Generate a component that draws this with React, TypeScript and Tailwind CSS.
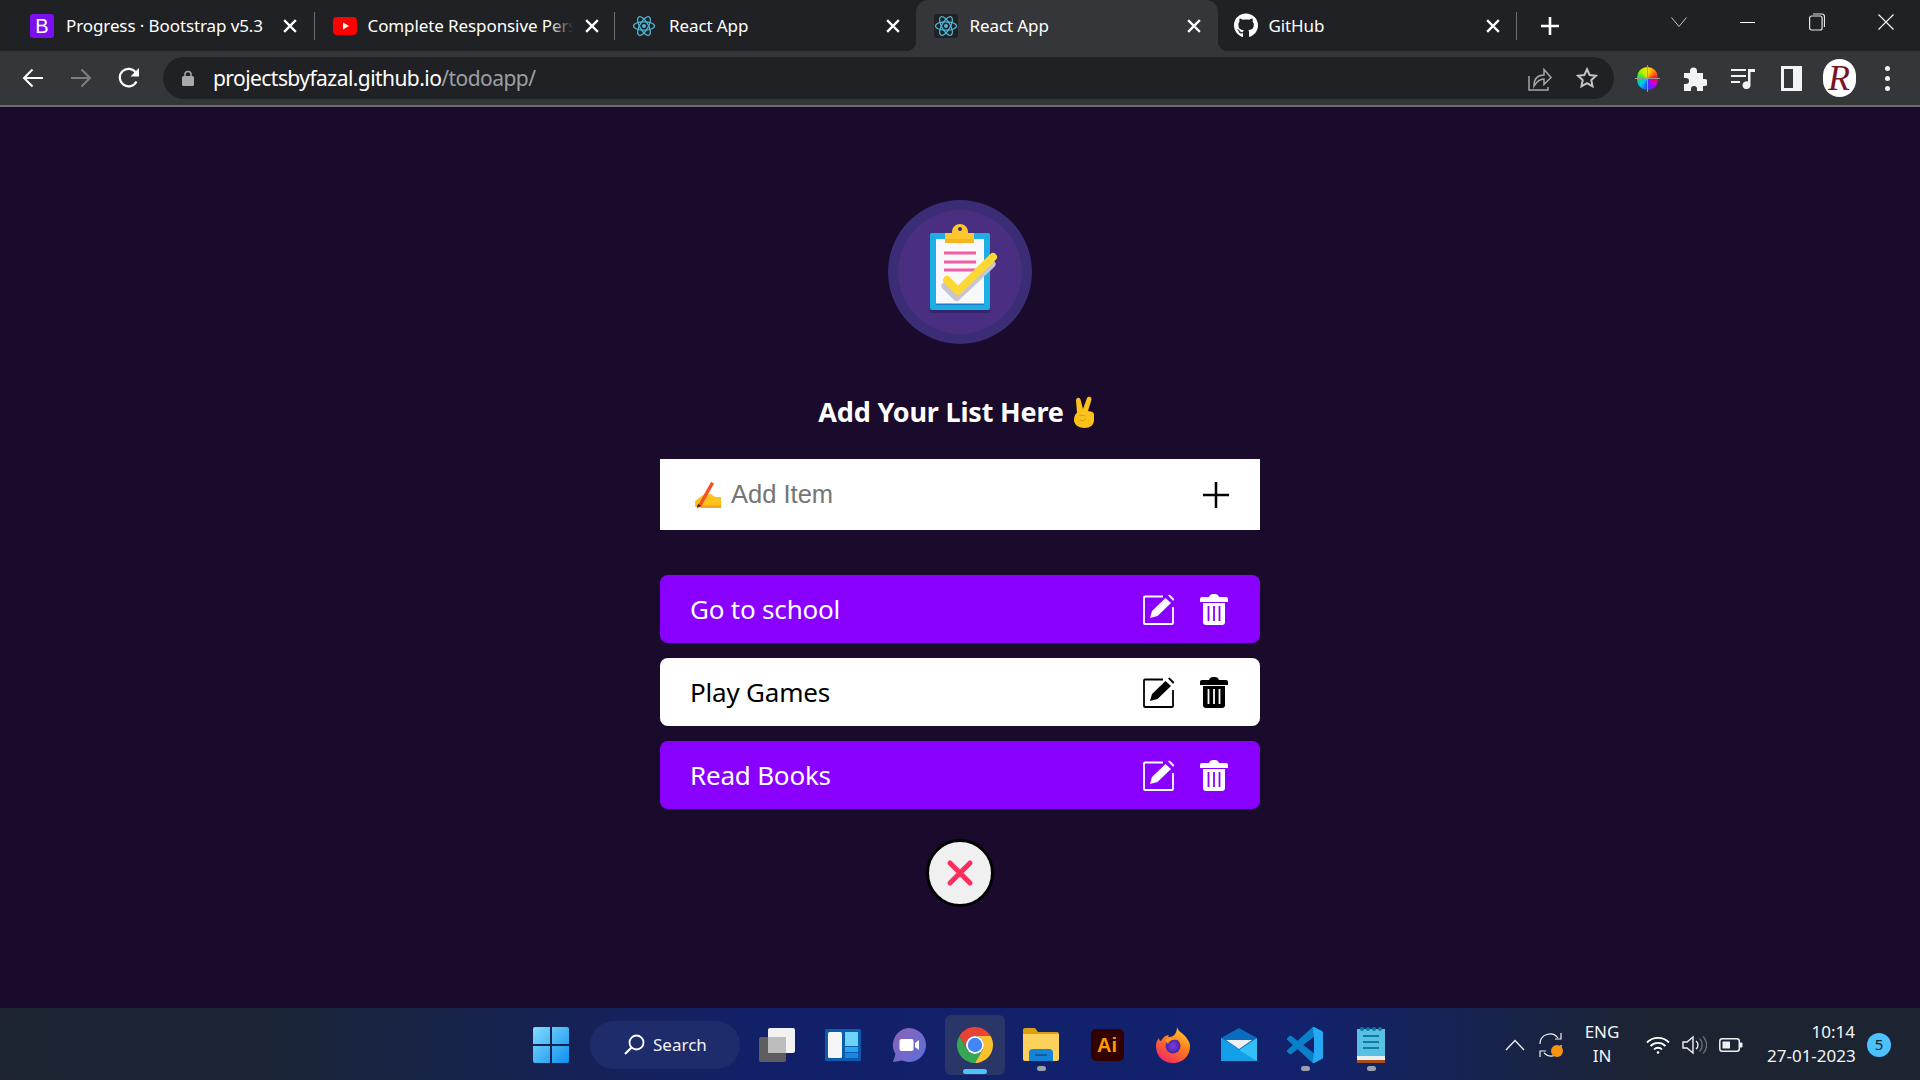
import React from "react";
import { FaGithub } from "react-icons/fa";

function ReactIcon({ size = 24 }: { size?: number }) {
  return (
    <svg width={size} height={size} viewBox="0 0 24 24" fill="none" stroke="#4fb9d8" strokeWidth="1.2">
      <circle cx="12" cy="12" r="2" fill="#4fb9d8" stroke="none" />
      <ellipse cx="12" cy="12" rx="10.5" ry="4.2" />
      <ellipse cx="12" cy="12" rx="10.5" ry="4.2" transform="rotate(60 12 12)" />
      <ellipse cx="12" cy="12" rx="10.5" ry="4.2" transform="rotate(120 12 12)" />
    </svg>
  );
}

function CloseX() {
  return (
    <svg width="14" height="14" viewBox="0 0 14 14" stroke="#fff" strokeWidth="2.4" strokeLinecap="square">
      <path d="M2 2l10 10M12 2L2 12" />
    </svg>
  );
}

function Tab({ icon, title, active, fade, sep = true, widthCls = "w-[300.5px]", iconCls = "ml-[16px]", textCls = "ml-[12px]" }: { icon: React.ReactNode; title: string; active?: boolean; fade?: boolean; sep?: boolean; widthCls?: string; iconCls?: string; textCls?: string }) {
  return (
    <div className={`relative flex h-[51px] shrink-0 items-center ${widthCls} ${active ? "rounded-t-[12px] bg-[#35363a]" : ""}`}>
      {active && <div className="absolute bottom-0 left-[-10px] h-[10px] w-[10px] bg-[radial-gradient(circle_at_0_0,transparent_10px,#35363a_10.500px)]" />}
      {active && <div className="absolute bottom-0 right-[-10px] h-[10px] w-[10px] bg-[radial-gradient(circle_at_100%_0,transparent_10px,#35363a_10.500px)]" />}
      <div className={`flex w-[24px] shrink-0 items-center justify-center ${iconCls}`}>{icon}</div>
      <div className={`relative w-[205px] shrink-0 overflow-hidden whitespace-nowrap text-[17px] leading-[24px] tracking-[-0.1px] text-white ${textCls}`}>
        {title}
        {fade && <div className="absolute right-0 top-0 h-full w-[24px] bg-gradient-to-r from-transparent to-[#202124]" />}
      </div>
      <div className="ml-[9px] flex w-[20px] shrink-0 items-center justify-center"><CloseX /></div>
      {sep && <div className="absolute right-0 top-[12px] h-[28px] w-[1px] bg-[#6b6e72]" />}
    </div>
  );
}

function EditIcon({ c }: { c: string }) {
  return (
    <svg width="32" height="31" viewBox="0 0 32 31" fill="none">
      <path d="M20 2.500H2a1 1 0 0 0-1 1V29a1 1 0 0 0 1 1h27a1 1 0 0 0 1-1V13" stroke={c} strokeWidth="1.800" />
      <path d="M7 24l2-7L22.500 4l5.500 5L14.500 22z" fill={c} />
      <path d="M25 1.500l1.600-1 4.600 4.400-1 2z" fill={c} />
    </svg>
  );
}

function TrashIcon({ c, hole }: { c: string; hole: string }) {
  return (
    <svg width="28" height="31" viewBox="0 0 28 31">
      <path d="M9 3Q10 0 13 0h2q3 0 4 3h7q2 0 2 2v3H0V5q0-2 2-2z" fill={c} />
      <path d="M3 9h22v19q0 3-3 3H6q-3 0-3-3z" fill={c} />
      <path d="M8.500 12v15M14 12v15M19.500 12v15" stroke={hole} strokeWidth="1.800" />
    </svg>
  );
}

function TodoRow({ text, active }: { text: string; active?: boolean }) {
  const fg = active ? "#ffffff" : "#000000";
  const bg = active ? "#8a00ff" : "#ffffff";
  return (
    <div className={active ? "flex h-[68px] items-center rounded-[8px] bg-[#8a00ff] pl-[30px] pr-[32px]" : "flex h-[68px] items-center rounded-[8px] bg-white pl-[30px] pr-[32px]"}>
      <span className={active ? "flex-1 pt-[1px] text-[26px] tracking-[-0.2px] text-white" : "flex-1 pt-[1px] text-[26px] tracking-[-0.2px] text-black"}>{text}</span>
      <EditIcon c={fg} />
      <div className="ml-[25px]"><TrashIcon c={fg} hole={bg} /></div>
    </div>
  );
}

function Logo() {
  return (
    <svg width="144" height="144" viewBox="0 0 144 144">
      <circle cx="72" cy="72" r="72" fill="#3b2d75" />
      <circle cx="72" cy="72" r="62" fill="#4a2e82" />
      <rect x="42" y="36" width="60" height="77" rx="2" fill="#35276b" />
      <rect x="42" y="33" width="60" height="77" rx="2" fill="#1eaee4" />
      <rect x="48" y="39" width="48" height="66" fill="#1a7fc4" />
      <rect x="48" y="39" width="48" height="64.500" fill="#f8f8fa" />
      <path d="M64 33v-1a8 8 0 0 1 16 0v1z" fill="#fdc72e" />
      <path d="M57 33h29v6H57z" fill="#fdc72e" />
      <path d="M57 39h29v4H57z" fill="#f5b61d" />
      <circle cx="72" cy="29" r="2" fill="#3b2d75" />
      <path d="M56 51.500h32v3H56zM56 60.500h32v3H56zM56 68.500h32v3H56z" fill="#ef5fa7" />
      <path d="M57.500 86l11 11 35-33" fill="none" stroke="#c8c5d0" strokeWidth="8" strokeLinecap="round" strokeLinejoin="round" />
      <path d="M59 80l11 11 35-34" fill="none" stroke="#fdd835" strokeWidth="8" strokeLinecap="round" strokeLinejoin="round" />
    </svg>
  );
}

function PeaceHand() {
  return (
    <svg width="26" height="32" viewBox="0 0 26 32">
      <path d="M7 17L6 4a2.300 2.300 0 0 1 4.500-.5L13 13l4-11a2.400 2.400 0 0 1 4.500 1.500L18 15l3 .5 2 1a3 3 0 0 1 1 2.500v5c0 5-4 8-9 8C9 32 4 29 4 24c0-3 1-6 3-7z" fill="#fcc21b" />
      <path d="M9 20c2-1 4-1 6 0M10 24c2 1 4 1 6-1" stroke="#e59600" strokeWidth="1" fill="none" />
    </svg>
  );
}

function WritingHand() {
  return (
    <svg width="27" height="27" viewBox="0 0 27 27">
      <path d="M0 26L0 20 8 14l8-1 4 3h6v10z" fill="#fcc21b" />
      <path d="M6 27h20v-3H6z" fill="#f5a623" />
      <path d="M2 26L16 1l3 1.500L6 26l-4 1z" fill="#f4511e" />
      <path d="M2 26l1-3 3 2z" fill="#222" />
    </svg>
  );
}

function ChromeIcon({ size = 36 }: { size?: number }) {
  return (
    <svg width={size} height={size} viewBox="4 4 40 40">
      <path d="M41.320 14A20 20 0 0 0 6.680 14L15.340 29A10 10 0 0 1 24 14Z" fill="#ea4335" />
      <path d="M6.680 14A20 20 0 0 0 24 44L32.660 29A10 10 0 0 1 15.340 29Z" fill="#34a853" />
      <path d="M41.320 14A20 20 0 0 1 24 44L32.660 29A10 10 0 0 0 24 14Z" fill="#fbc02d" />
      <circle cx="24" cy="24" r="10" fill="#fff" />
      <circle cx="24" cy="24" r="8" fill="#4285f4" />
    </svg>
  );
}

function TaskSlot({ children, dot, active }: { children: React.ReactNode; dot?: boolean; active?: boolean }) {
  return (
    <div className={active ? "relative flex h-[60px] w-[60px] shrink-0 items-center justify-center rounded-[6px] bg-[#2a3568]" : "relative flex h-[60px] w-[60px] shrink-0 items-center justify-center"}>
      {children}
      {dot && <div className="absolute bottom-[4px] h-[5px] w-[9px] rounded-full bg-[#9aa0ad]" />}
      {active && <div className="absolute bottom-[1px] h-[5px] w-[24px] rounded-full bg-[#4cc2ff]" />}
    </div>
  );
}

export default function App() {
  return (
    <div className="flex h-screen w-screen flex-col overflow-hidden bg-[#1a0b2c] font-['Noto_Sans','Open_Sans',sans-serif]">
      {/* tab strip */}
      <div className="flex h-[51px] shrink-0 items-stretch bg-[#202124] pl-[14px]">
        <Tab title="Progress · Bootstrap v5.3" icon={
          <svg width="24" height="24" viewBox="0 0 24 24"><rect width="24" height="24" rx="3" fill="#7a10ef" /><text x="12" y="19" textAnchor="middle" fontSize="20" fill="#fff" fontFamily="Liberation Sans">B</text></svg>
        } />
        <Tab title="Complete Responsive Personal" fade iconCls="ml-[18px]" textCls="ml-[11px]" icon={
          <svg width="24" height="18" viewBox="0 0 24 18"><rect width="24" height="18" rx="4" fill="#f00" /><path d="M10 5.500l6 3.500-6 3.500z" fill="#fff" /></svg>
        } />
        <Tab title="React App" sep={false} iconCls="ml-[17px]" textCls="ml-[13px]" icon={<ReactIcon />} />
        <Tab title="React App" active sep={false} widthCls="w-[302px]" iconCls="ml-[18px]" textCls="ml-[12px]" icon={<div className="flex h-[24px] w-[24px] items-center justify-center rounded-[3px] bg-[#202124]"><ReactIcon /></div>} />
        <Tab title="GitHub" widthCls="w-[299px]" icon={<FaGithub className="text-white" size={25} />} textCls="ml-[11px]" />
        <div className="ml-[22px] flex w-[22px] items-center justify-center">
          <svg width="18" height="18" viewBox="0 0 18 18" stroke="#fff" strokeWidth="2.600"><path d="M9 0v18M0 9h18" /></svg>
        </div>
        <div className="flex-1" />
        <div className="flex h-[44px] w-[68px] items-center justify-center">
          <svg width="16" height="10" viewBox="0 0 16 10" fill="none" stroke="#c8c8c8" strokeWidth="1"><path d="M.5.500L8 9.500 15.500.500" /></svg>
        </div>
        <div className="flex h-[44px] w-[69px] items-center justify-center">
          <div className="h-[1px] w-[15px] bg-white" />
        </div>
        <div className="flex h-[44px] w-[69px] items-center justify-center">
          <svg width="16" height="18" viewBox="0 0 16 18" fill="none" stroke="#e8e8e8" strokeWidth="1.200"><rect x=".6" y="3" width="12.500" height="14" rx="2" /><path d="M4 1h9a2.500 2.500 0 0 1 2.500 2.500V14" /></svg>
        </div>
        <div className="flex h-[44px] w-[69px] items-center justify-center">
          <svg width="16" height="16" viewBox="0 0 16 16" stroke="#fff" strokeWidth="1.100"><path d="M.5.500l15 15M15.500.500l-15 15" /></svg>
        </div>
      </div>

      {/* toolbar */}
      <div className="flex h-[56px] shrink-0 items-start border-b-2 border-[#6a6c70] bg-[#35363a] px-[9px]">
        <div className="flex h-[54px] w-[48px] items-center justify-center">
          <svg width="22" height="20" viewBox="0 0 22 20" fill="none" stroke="#fff" strokeWidth="2"><path d="M21 10H2M10.500 1.500L2 10l8.500 8.500" /></svg>
        </div>
        <div className="flex h-[54px] w-[48px] items-center justify-center">
          <svg width="22" height="20" viewBox="0 0 22 20" fill="none" stroke="#7d7f83" strokeWidth="2"><path d="M1 10h19M11.500 1.500L20 10l-8.500 8.500" /></svg>
        </div>
        <div className="flex h-[54px] w-[48px] items-center justify-center">
          <svg width="22" height="22" viewBox="0 0 22 22" fill="none"><path d="M18.500 14.500A8.800 8.800 0 1 1 17.800 5.500" stroke="#fff" strokeWidth="2.200" /><path d="M21 1v8.500h-8.500z" fill="#fff" /></svg>
        </div>
        <div className="ml-[10px] mt-[6px] flex h-[42px] flex-1 items-center rounded-full bg-[#202124] pl-[19px] pr-[16px]">
          <svg width="12" height="16" viewBox="0 0 12 16"><path d="M3 6.500V4.500a3 3 0 0 1 6 0v2" fill="none" stroke="#a8a9ab" strokeWidth="1.500" /><rect y="6" width="12" height="10" rx="1.500" fill="#a8a9ab" /></svg>
          <span className="ml-[19px] text-[21px] leading-[28px] tracking-[-0.56px] text-white">projectsbyfazal.github.io<span className="text-[#9aa0a6]">/todoapp/</span></span>
          <div className="flex-1" />
          <svg width="24" height="26" viewBox="0 0 24 26" fill="none" stroke="#a6a7a9" strokeWidth="1.500"><path d="M1 11v14h19v-3" /><path d="M6 21c0-7 3-11 10-11V4.500l7 8-7 7V14c-4 0-7 2-10 7z" /></svg>
          <div className="ml-[24px]">
            <svg width="22" height="22" viewBox="0 0 24 24" fill="none" stroke="#c4c5c7" strokeWidth="2.200"><path d="M12 2.500l2.900 6.300 6.800.8-5 4.700 1.300 6.800-6-3.400-6 3.400 1.300-6.800-5-4.700 6.800-.8z" /></svg>
          </div>
        </div>
        <div className="ml-[9px] flex h-[54px] w-[48px] items-center justify-center">
          <div className="relative">
            <div className="h-[23px] w-[21px] rounded-full bg-[conic-gradient(#ffe600,#ff8000,#ff0040,#c000ff,#2040ff,#00c0ff,#00e060,#a0f000,#ffe600)]" />
            <div className="absolute left-[-2px] top-[11px] h-[1px] w-[25px] bg-[#9a9a9a]" />
            <div className="absolute left-[10px] top-[-2px] h-[27px] w-[1px] bg-[#9a9a9a]" />
          </div>
        </div>
        <div className="flex h-[54px] w-[48px] items-center justify-center">
          <svg width="23" height="25" viewBox="0 0 23 25" fill="#f1f3f4"><path d="M0 7h6V5a3.500 3.500 0 0 1 7 0v2h6v6h1.500a3.500 3.500 0 0 1 0 7H19v5H13v-2a3 3 0 0 0-6 0v2H0v-7h2a3 3 0 0 0 0-6H0z" /></svg>
        </div>
        <div className="flex h-[54px] w-[48px] items-center justify-center">
          <svg width="24" height="22" viewBox="0 0 24 22" fill="#f1f3f4"><path d="M0 2h15v2H0zM0 8h15v2H0zM0 14h9v2H0z" /><path d="M17 2h7v3h-4.500v13a4 4 0 1 1-2.500-3.500z" /></svg>
        </div>
        <div className="flex h-[54px] w-[48px] items-center justify-center">
          <div className="h-[25px] w-[21px] border-[3px] border-r-[9px] border-[#f1f3f4] bg-[#35363a]" />
        </div>
        <div className="flex h-[54px] w-[48px] items-center justify-center">
          <div className="flex h-[38px] w-[33px] items-center justify-center rounded-full bg-white font-['Liberation_Serif',serif] text-[36px] italic leading-none text-[#7a1526]">R</div>
        </div>
        <div className="flex h-[54px] w-[48px] flex-col items-center justify-center gap-[5px]">
          <div className="h-[5px] w-[5px] rounded-full bg-[#f1f3f4]" />
          <div className="h-[5px] w-[5px] rounded-full bg-[#f1f3f4]" />
          <div className="h-[5px] w-[5px] rounded-full bg-[#f1f3f4]" />
        </div>
      </div>

      {/* page */}
      <div className="flex flex-1 flex-col items-center pt-[93px]">
        <Logo />
        <div className="mt-[48px] mr-[6px] flex h-[40px] items-center gap-[6px]">
          <span className="text-[27px] font-bold tracking-[-0.19px] text-white">Add Your List Here</span>
          <PeaceHand />
        </div>
        <div className="mt-[27px] flex h-[71px] w-[600px] items-center bg-white pl-[35px] pr-[30px]">
          <WritingHand />
          <span className="ml-[9px] flex-1 font-['Liberation_Sans',sans-serif] text-[25.500px] text-[#757575]">Add Item</span>
          <svg width="28" height="28" viewBox="0 0 28 28" stroke="#000" strokeWidth="2.500"><path d="M14 1v26M1 14h26" /></svg>
        </div>
        <div className="mt-[45px] flex w-[600px] flex-col gap-[15px]">
          <TodoRow text="Go to school" active />
          <TodoRow text="Play Games" />
          <TodoRow text="Read Books" active />
        </div>
        <div className="mt-[30px] flex h-[68px] w-[68px] items-center justify-center rounded-full border-[3px] border-black bg-[#f0f0f0]">
          <svg width="28" height="28" viewBox="0 0 28 28" stroke="#ff2d5e" strokeWidth="5" strokeLinecap="round"><path d="M4 4l20 20M24 4L4 24" /></svg>
        </div>
      </div>

      {/* taskbar */}
      <div className="flex h-[72px] shrink-0 items-center bg-[linear-gradient(90deg,#1c2431_0%,#1b2536_14%,#12206a_40%,#12226c_68%,#1c2431_86%,#1c2431_100%)] pl-[521px] pt-[1px] font-['Noto_Sans',sans-serif] text-white">
        <div className="flex h-[60px] w-[60px] shrink-0 items-center justify-center">
          <svg width="36" height="36" viewBox="0 0 36 36">
            <defs><linearGradient id="win" x1="0" y1="0" x2="1" y2="1"><stop offset="0" stopColor="#84dcfc" /><stop offset="1" stopColor="#0d8ff0" /></linearGradient></defs>
            <path d="M0 2a2 2 0 0 1 2-2h15v17H0zM19 0h15a2 2 0 0 1 2 2v15H19zM0 19h17v17H2a2 2 0 0 1-2-2zM19 19h17v15a2 2 0 0 1-2 2H19z" fill="url(#win)" />
          </svg>
        </div>
        <div className="ml-[9px] mr-[7px] flex h-[48px] w-[150px] shrink-0 items-center rounded-full bg-[#1f2c6b] pl-[34px]">
          <svg width="21" height="21" viewBox="0 0 21 21" fill="none" stroke="#fff" strokeWidth="1.800"><circle cx="12.500" cy="8.500" r="7" /><path d="M7.500 13.500L1 20" strokeWidth="2.200" /></svg>
          <span className="ml-[8px] text-[17px] text-[#f2f2f2]">Search</span>
        </div>
        <div className="flex gap-[6px]">
          <TaskSlot>
            <svg width="36" height="34" viewBox="0 0 36 34">
              <rect x="9" y="0" width="27" height="25" rx="2" fill="#f2f2f2" />
              <rect x="0" y="9" width="27" height="25" rx="2" fill="#5e5e60" />
              <rect x="9" y="9" width="18" height="16" fill="#bdbdbd" />
            </svg>
          </TaskSlot>
          <TaskSlot>
            <svg width="36" height="32" viewBox="0 0 36 32">
              <rect width="36" height="32" rx="1.500" fill="#0b5cad" />
              <rect x="3" y="3" width="14" height="26" rx="1.500" fill="#f5f5f5" />
              <rect x="20" y="3" width="13" height="14" fill="#6fd3f7" />
              <rect x="20" y="18" width="13" height="5" fill="#2aa4f4" />
              <rect x="20" y="24" width="13" height="5" fill="#1c86e0" />
            </svg>
          </TaskSlot>
          <TaskSlot>
            <svg width="34" height="34" viewBox="0 0 34 34">
              <defs><linearGradient id="tm" x1="0" y1="0" x2="1" y2="1"><stop offset="0" stopColor="#8c62b4" /><stop offset="1" stopColor="#5b6fdc" /></linearGradient></defs>
              <path d="M17 0a17 17 0 1 1-7 32.500L1 34l2.500-8A17 17 0 0 1 17 0z" fill="url(#tm)" />
              <rect x="7.500" y="11" width="14" height="12" rx="2" fill="#fff" />
              <path d="M23 15l4-3v10l-4-3z" fill="#fff" />
            </svg>
          </TaskSlot>
          <TaskSlot active><ChromeIcon /></TaskSlot>
          <TaskSlot dot>
            <svg width="36" height="33" viewBox="0 0 36 33">
              <path d="M0 2a2 2 0 0 1 2-2h10l3 4h19a2 2 0 0 1 2 2v3H0z" fill="#d9a10d" />
              <path d="M0 6h36v25a2 2 0 0 1-2 2H2a2 2 0 0 1-2-2z" fill="#fdd15c" />
              <path d="M6 33V25a4 4 0 0 1 4-4h16a4 4 0 0 1 4 4v8z" fill="#1384d8" />
              <path d="M12 27h12" stroke="#0a4f94" strokeWidth="1.500" />
            </svg>
          </TaskSlot>
          <TaskSlot>
            <div className="flex h-[32px] w-[33px] items-center justify-center rounded-[5px] bg-[#330000] font-['Liberation_Sans',sans-serif] text-[20px] font-bold text-[#ff9a00]">Ai</div>
          </TaskSlot>
          <TaskSlot>
            <svg width="34" height="36" viewBox="0 0 34 36">
              <defs>
                <linearGradient id="ff" x1="0.8" y1="0" x2="0.2" y2="1"><stop offset="0" stopColor="#ffd43a" /><stop offset="0.45" stopColor="#ff7a1a" /><stop offset="1" stopColor="#f0246a" /></linearGradient>
                <radialGradient id="ffc"><stop offset="0" stopColor="#7a3fe0" /><stop offset="1" stopColor="#4b22a8" /></radialGradient>
              </defs>
              <path d="M21 0c1 4 4 5 7 8 4 4 6 8 6 11 0 10-7 17-17 17S0 29 0 19c0-3 1-6 3-8 0 2 1 3 2 3 2-4 5-6 8-6-1 1-1 2 0 2 4 0 8-3 8-10z" fill="url(#ff)" />
              <circle cx="17" cy="19" r="7.500" fill="url(#ffc)" />
              <path d="M9 13c4-3 10-3 13 0-4-1-9 0-10 4z" fill="#ff9a1f" />
            </svg>
          </TaskSlot>
          <TaskSlot>
            <svg width="36" height="33" viewBox="0 0 36 33">
              <path d="M0 10L18 0l18 10v13H0z" fill="#0a6cc0" />
              <path d="M5 12h26L18 21z" fill="#f0f0f2" />
              <path d="M0 10l18 12 18-12v23H0z" fill="#35c0f5" />
              <path d="M0 10l18 12 18 11H0z" fill="#14a0e8" />
            </svg>
          </TaskSlot>
          <TaskSlot dot>
            <svg width="36" height="36" viewBox="0 0 100 100">
              <path d="M70.900 99.300a6.200 6.200 0 0 0 5-.2l20.600-9.900a6.200 6.200 0 0 0 3.500-5.600V16.400a6.200 6.200 0 0 0-3.500-5.600L75.900.9a6.200 6.200 0 0 0-7.100 1.200L29.400 38 12.200 25a4.200 4.200 0 0 0-5.300.2l-5.500 5a4.200 4.200 0 0 0 0 6.200L16.300 50 1.400 63.600a4.200 4.200 0 0 0 0 6.200l5.500 5a4.200 4.200 0 0 0 5.300.2l17.200-13 39.400 35.900a6.200 6.200 0 0 0 2.100 1.400zM75 27.300L45.100 50 75 72.700z" fill="#0a7fc9" fillRule="evenodd" />
              <path d="M71 99.500a6.200 6.200 0 0 0 5-.4l20.500-9.900a6.200 6.200 0 0 0 3.500-5.600V16.400a6.200 6.200 0 0 0-3.500-5.600L75.900.9A6.200 6.200 0 0 0 71 .6L75 27.300v45.400z" fill="#25a9f2" />
            </svg>
          </TaskSlot>
          <TaskSlot dot>
            <svg width="28" height="36" viewBox="0 0 28 36">
              <path d="M0 2h28v30H0z" fill="#58c0e2" />
              <path d="M0 29h28v4H0z" fill="#eeeeee" />
              <path d="M0 33h28v3H0z" fill="#a8501a" />
              <path d="M6 9h16M6 15h16M6 21h16" stroke="#0e7ba6" strokeWidth="2" />
              <circle cx="5" cy="2" r="2" fill="#0e7ba6" /><circle cx="11" cy="2" r="2" fill="#0e7ba6" /><circle cx="17" cy="2" r="2" fill="#0e7ba6" /><circle cx="23" cy="2" r="2" fill="#0e7ba6" />
            </svg>
          </TaskSlot>
        </div>
        {/* tray */}
        <div className="ml-auto flex items-center pr-[29px]">
          <svg width="20" height="12" viewBox="0 0 20 12" fill="none" stroke="#f0f0f0" strokeWidth="1.300"><path d="M1 11l9-9.500 9 9.500" /></svg>
          <div className="relative ml-[14px] h-[26px] w-[24px]">
            <svg width="24" height="26" viewBox="0 0 24 26" fill="none" stroke="#f0f0f0" strokeWidth="1.200"><path d="M1 12A10 10 0 0 1 19 6M22 13A10 10 0 0 1 5 21" /><path d="M22 1v6h-6M1 25v-6h6" /></svg>
            <div className="absolute left-[12px] top-[13px] h-[12px] w-[12px] rounded-full bg-[#f7930e]" />
          </div>
          <div className="ml-[19px] mb-[2px] w-[40px] text-center text-[17px] leading-[24px] text-[#f4f4f4]">ENG<br />IN</div>
          <div className="ml-[24px]">
            <svg width="24" height="18" viewBox="0 0 24 18" fill="none" stroke="#fff" strokeWidth="1.800"><path d="M1 6.500a15.500 15.500 0 0 1 22 0M4.500 10a10.500 10.500 0 0 1 15 0M8 13.500a5.500 5.500 0 0 1 8 0" /><circle cx="12" cy="16.500" r="1.300" fill="#fff" stroke="none" /></svg>
          </div>
          <div className="ml-[12px]">
            <svg width="25" height="20" viewBox="0 0 25 20" fill="none" stroke="#f0f0f0" strokeWidth="1.400"><path d="M1 7h4l6-5v16l-6-5H1z" /><path d="M14 6a5 5 0 0 1 0 8" /><path d="M17.500 3.500a9 9 0 0 1 0 13M21 1.500a12 12 0 0 1 0 17" stroke="#6c7079" /></svg>
          </div>
          <div className="ml-[12px]">
            <svg width="24" height="14" viewBox="0 0 24 14" fill="none"><rect x=".8" y=".8" width="19.500" height="12.400" rx="2.500" stroke="#f0f0f0" strokeWidth="1.500" /><rect x="3.500" y="3.500" width="7.500" height="7" fill="#f0f0f0" /><path d="M21 4.500h1.500a1 1 0 0 1 1 1v3a1 1 0 0 1-1 1H21z" fill="#f0f0f0" /></svg>
          </div>
          <div className="ml-[24px] mb-[2px] w-[88px] text-right text-[17px] leading-[24px] text-[#f4f4f4]">
            <div className="whitespace-nowrap">10:14</div>
            <div className="whitespace-nowrap">27-01-2023</div>
          </div>
          <div className="ml-[12px] flex h-[24px] w-[24px] items-center justify-center rounded-full bg-[#4cc2ff] text-[15px] text-[#10202c]">5</div>
        </div>
      </div>
    </div>
  );
}
